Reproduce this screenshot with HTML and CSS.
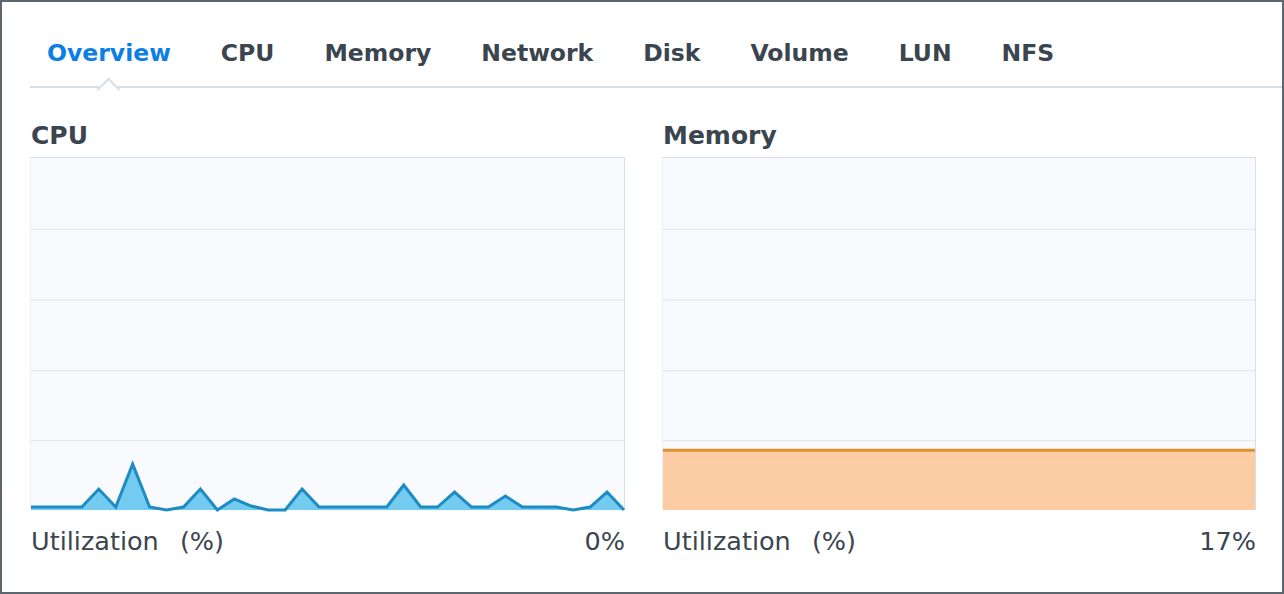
FILE: index.html
```html
<!DOCTYPE html>
<html>
<head>
<meta charset="utf-8">
<link rel="stylesheet" href="styles.css">
</head>
<body>
<div class="frame">
  <nav class="tabs">
    <div class="tab active">Overview</div>
    <div class="tab">CPU</div>
    <div class="tab">Memory</div>
    <div class="tab">Network</div>
    <div class="tab">Disk</div>
    <div class="tab">Volume</div>
    <div class="tab">LUN</div>
    <div class="tab">NFS</div>
  </nav>
  <div class="panels">
    <section class="panel">
      <h2 class="title">CPU</h2>
      <div class="chart">
        <svg class="plot" viewBox="0 0 595 353" preserveAspectRatio="none">
          <g class="grid">
            <line x1="0" y1="71.5" x2="595" y2="71.5"/>
            <line x1="0" y1="142.5" x2="595" y2="142.5"/>
            <line x1="0" y1="213.5" x2="595" y2="213.5"/>
            <line x1="0" y1="283.5" x2="595" y2="283.5"/>
          </g>
          <polygon class="cpu-fill" points="0,353 0,350 17,350 34,350 51,350 68,332 85,350 102,307 119,350 136,353 153,350 170,332 187,353 204,342 221,349 238,353 255,353 272,332 289,350 306,350 323,350 340,350 357,350 374,328 391,350 408,350 425,335 442,350 459,350 476,339 493,350 510,350 527,350 544,353 561,350 578,335 595,353"/>
          <polyline class="cpu-line" points="0,350 17,350 34,350 51,350 68,332 85,350 102,307 119,350 136,353 153,350 170,332 187,353 204,342 221,349 238,353 255,353 272,332 289,350 306,350 323,350 340,350 357,350 374,328 391,350 408,350 425,335 442,350 459,350 476,339 493,350 510,350 527,350 544,353 561,350 578,335 595,353"/>
        </svg>
      </div>
      <div class="footer"><span class="label">Utilization <span class="unit">(%)</span></span><span class="value">0%</span></div>
    </section>
    <section class="panel">
      <h2 class="title">Memory</h2>
      <div class="chart">
        <svg class="plot" viewBox="0 0 594 353" preserveAspectRatio="none">
          <g class="grid">
            <line x1="0" y1="71.5" x2="594" y2="71.5"/>
            <line x1="0" y1="142.5" x2="594" y2="142.5"/>
            <line x1="0" y1="213.5" x2="594" y2="213.5"/>
            <line x1="0" y1="283.5" x2="594" y2="283.5"/>
          </g>
          <rect class="mem-fill" x="0" y="293" width="594" height="60"/>
          <line class="mem-line" x1="0" y1="293" x2="594" y2="293"/>
        </svg>
      </div>
      <div class="footer"><span class="label">Utilization <span class="unit">(%)</span></span><span class="value">17%</span></div>
    </section>
  </div>
</div>
</body>
</html>
```

FILE: styles.css
```css
html, body {
  margin: 0;
  padding: 0;
  background: #ffffff;
}

.frame {
  box-sizing: border-box;
  width: 1284px;
  height: 594px;
  border: 2px solid #5e6770;
  padding-left: 28px;
  font-family: "DejaVu Sans", Verdana, sans-serif;
  color: #3b4550;
}

.tabs {
  display: flex;
  gap: 50px;
  padding-left: 17px;
  height: 84px;
  border-bottom: 2px solid #d6dfe8;
}

.tab {
  position: relative;
  padding-top: 37px;
  line-height: 28px;
  font-size: 23.5px;
  font-weight: bold;
  color: #3b4550;
  white-space: nowrap;
}

.tab.active {
  color: #0b7fe6;
}

.tab.active::after {
  content: "";
  position: absolute;
  left: 50%;
  bottom: -12px;
  width: 17px;
  height: 17px;
  margin-left: -9px;
  background: #ffffff;
  border-top: 2px solid #d6dfe8;
  border-left: 2px solid #d6dfe8;
  box-sizing: border-box;
  transform: rotate(45deg);
}

.panels {
  display: grid;
  grid-template-columns: 595px 594px;
  column-gap: 37px;
}

.title {
  margin: 0;
  padding: 33px 0 6px 1px;
  line-height: 30px;
  font-size: 25px;
  font-weight: bold;
  color: #3b4550;
}

.chart {
  height: 353px;
  background: #f8fafd;
  box-sizing: border-box;
  border-top: 1px solid #d7e0ea;
  border-right: 1px solid #d7e0ea;
  border-left: 1px solid #edf1f6;
}

.plot {
  display: block;
  width: 100%;
  height: 100%;
  overflow: visible;
}

.grid line {
  stroke: #dfe6ee;
  stroke-width: 1;
}

.cpu-fill {
  fill: #73cbf0;
}

.cpu-line {
  fill: none;
  stroke: #1e8cc4;
  stroke-width: 3;
  stroke-linejoin: miter;
}

.mem-fill {
  fill: #fccca5;
}

.mem-line {
  stroke: #e0902e;
  stroke-width: 3;
}

.footer {
  display: flex;
  justify-content: space-between;
  padding-top: 16px;
  line-height: 30px;
  font-size: 25.5px;
  color: #3b4550;
}

.label {
  padding-left: 1px;
}

.unit {
  margin-left: 13px;
}
```
